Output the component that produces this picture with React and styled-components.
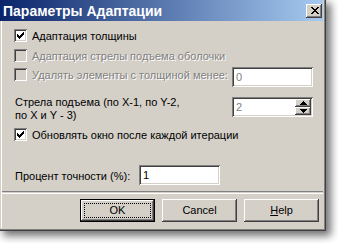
import React from "react";
import styled, { createGlobalStyle } from "styled-components";

const Global = createGlobalStyle`
  html, body { margin: 0; padding: 0; background: #ffffff; overflow: hidden; }
  #root { width: 338px; height: 243px; }
`;

const Window = styled.div`
  box-sizing: border-box;
  width: 326px;
  height: 231px;
  background: #d4d0c8;
  border-right: 1px solid #404040;
  border-bottom: 1px solid #404040;
  padding: 0 2px 2px 0;
  box-shadow: inset -1px -1px 0 #808080, 4px 4px 8px 1px rgba(0, 0, 0, 0.55);
  display: flex;
  flex-direction: column;
  font-family: "Liberation Sans", Arial, sans-serif;
  font-size: 11px;
  color: #000;
`;

const TitleBar = styled.div`
  height: 21px;
  flex: none;
  background: linear-gradient(to right, #0a246a, #a6caf0);
  display: flex;
  align-items: center;
  justify-content: space-between;
  padding: 0 1px 0 3px;
`;

const TitleText = styled.span`
  font-family: "Liberation Sans", Arial, sans-serif;
  font-weight: bold;
  font-size: 14px;
  color: #fff;
  line-height: 21px;
  padding-top: 1px;
`;

const CloseBtn = styled.div`
  width: 16px;
  height: 14px;
  background: #d4d0c8;
  box-shadow: inset -1px -1px 0 #404040, inset 1px 1px 0 #fff,
    inset -2px -2px 0 #808080, inset 2px 2px 0 #d4d0c8;
  display: flex;
  align-items: center;
  justify-content: center;
  padding: 0 0 1px 1px;
  box-sizing: border-box;
`;

const Client = styled.div`
  flex: 1;
  margin-left: 1px;
  border-left: 1px solid #fff;
  display: flex;
  flex-direction: column;
  padding-top: 5px;
`;

const Row = styled.div`
  display: flex;
  align-items: flex-start;
  height: ${(p) => p.$h}px;
  margin-top: ${(p) => p.$mt || 0}px;
  padding-left: 12px;
  padding-right: 10px;
  flex: none;
`;

const Box = styled.div`
  width: 13px;
  height: 13px;
  box-sizing: border-box;
  margin-top: 3px;
  flex: none;
  background: ${(p) => (p.$disabled ? "#d4d0c8" : "#fff")};
  box-shadow: inset 1px 1px 0 #808080, inset -1px -1px 0 #fff,
    inset 2px 2px 0 #404040, inset -2px -2px 0 #d4d0c8;
  display: flex;
  padding: 3px 0 0 3px;
`;

const CheckLabel = styled.span`
  margin-left: 5px;
  line-height: 20px;
  white-space: nowrap;
  color: ${(p) => (p.$disabled ? "#808080" : "#000")};
  text-shadow: ${(p) => (p.$disabled ? "1px 1px 0 #fff" : "none")};
`;

const Edit = styled.div`
  box-sizing: border-box;
  width: 81px;
  height: 20px;
  margin-left: ${(p) => (p.$inline ? "0" : "auto")};
  margin-top: ${(p) => p.$mt || 0}px;
  background: #fff;
  box-shadow: inset 1px 1px 0 #808080, inset -1px -1px 0 #fff,
    inset 2px 2px 0 #404040, inset -2px -2px 0 #d4d0c8;
  display: flex;
  align-items: stretch;
  padding: 2px;
  flex: none;
`;

const EditText = styled.span`
  flex: 1;
  padding-left: 2px;
  line-height: 16px;
  color: ${(p) => (p.$disabled ? "#808080" : "#000")};
`;

const Spin = styled.div`
  width: 16px;
  display: flex;
  flex-direction: column;
`;

const SpinBtn = styled.div`
  flex: 1;
  background: #d4d0c8;
  box-shadow: inset -1px -1px 0 #404040, inset 1px 1px 0 #fff,
    inset -2px -2px 0 #808080, inset 2px 2px 0 #d4d0c8;
  display: flex;
  align-items: center;
  justify-content: center;
`;

const Text = styled.div`
  line-height: ${(p) => p.$lh || 13}px;
  padding-left: 1px;
  width: ${(p) => (p.$w ? p.$w + "px" : "auto")};
  padding-top: ${(p) => p.$pt || 0}px;
  flex: none;
`;

const Separator = styled.div`
  height: 1px;
  border-top: 1px solid #808080;
  border-bottom: 1px solid #fff;
  margin-top: ${(p) => p.$mt}px;
  flex: none;
`;

const Buttons = styled.div`
  display: flex;
  justify-content: flex-end;
  gap: 7px;
  padding-right: 4px;
  margin-top: 5px;
`;

const Btn = styled.div`
  box-sizing: border-box;
  width: 75px;
  height: 23px;
  background: #d4d0c8;
  border: ${(p) => (p.$default ? "1px solid #000" : "0")};
  box-shadow: inset -1px -1px 0 #404040, inset 1px 1px 0 #fff,
    inset -2px -2px 0 #808080, inset 2px 2px 0 #d4d0c8;
  display: flex;
  padding: ${(p) => (p.$default ? "3px" : "4px")};
`;

const BtnLabel = styled.span`
  flex: 1;
  border: 1px dotted ${(p) => (p.$focus ? "#000" : "transparent")};
  display: flex;
  align-items: center;
  justify-content: center;
  font-size: 11px;
  line-height: 13px;
`;

const CHECK = ["......#", ".....##", "#...###", "##.###.", "#####..", ".###...", "..#...."];
const XMARK = ["##....##", ".##..##.", "..####..", "...##...", "..####..", ".##..##.", "##....##"];
const UP = ["...#...", "..###..", ".#####.", "#######"];
const DOWN = ["#######", ".#####.", "..###..", "...#..."];

function Pixels({ rows, color = "#000" }) {
  const w = rows[0].length;
  const h = rows.length;
  const rects = [];
  rows.forEach((r, y) =>
    r.split("").forEach((c, x) => {
      if (c === "#") rects.push(<rect key={x + "-" + y} x={x} y={y} width="1" height="1" fill={color} />);
    })
  );
  return (
    <svg width={w} height={h} viewBox={`0 0 ${w} ${h}`} shapeRendering="crispEdges" style={{ display: "block" }}>
      {rects}
    </svg>
  );
}

function Check({ checked, disabled }) {
  return <Box $disabled={disabled}>{checked && <Pixels rows={CHECK} />}</Box>;
}

export default function App() {
  return (
    <>
      <Global />
      <Window>
        <TitleBar>
          <TitleText>Параметры Адаптации</TitleText>
          <CloseBtn>
            <Pixels rows={XMARK} />
          </CloseBtn>
        </TitleBar>
        <Client>
          <Row $h={20}>
            <Check checked />
            <CheckLabel>Адаптация толщины</CheckLabel>
          </Row>
          <Row $h={19}>
            <Check disabled />
            <CheckLabel $disabled>Адаптация стрелы подъема оболочки</CheckLabel>
          </Row>
          <Row $h={22}>
            <Check disabled />
            <CheckLabel $disabled>Удалять элементы с толщиной менее:</CheckLabel>
            <Edit $mt={2}>
              <EditText $disabled>0</EditText>
            </Edit>
          </Row>
          <Row $h={26} $mt={9}>
            <Text $lh={13}>
              Стрела подъема (по X-1, по Y-2,
              <br />
              по X и Y - 3)
            </Text>
            <Edit $mt={1}>
              <EditText $disabled>2</EditText>
              <Spin>
                <SpinBtn>
                  <Pixels rows={UP} />
                </SpinBtn>
                <SpinBtn>
                  <Pixels rows={DOWN} />
                </SpinBtn>
              </Spin>
            </Edit>
          </Row>
          <Row $h={19} $mt={3}>
            <Check checked />
            <CheckLabel>Обновлять окно после каждой итерации</CheckLabel>
          </Row>
          <Row $h={20} $mt={21}>
            <Text $lh={20} $w={124} $pt={1}>
              Процент точности (%):
            </Text>
            <Edit $inline>
              <EditText>1</EditText>
            </Edit>
          </Row>
          <Separator $mt={6} />
          <Buttons>
            <Btn $default>
              <BtnLabel $focus>OK</BtnLabel>
            </Btn>
            <Btn>
              <BtnLabel>Cancel</BtnLabel>
            </Btn>
            <Btn>
              <BtnLabel>
                <span>
                  <u>H</u>elp
                </span>
              </BtnLabel>
            </Btn>
          </Buttons>
        </Client>
      </Window>
    </>
  );
}
